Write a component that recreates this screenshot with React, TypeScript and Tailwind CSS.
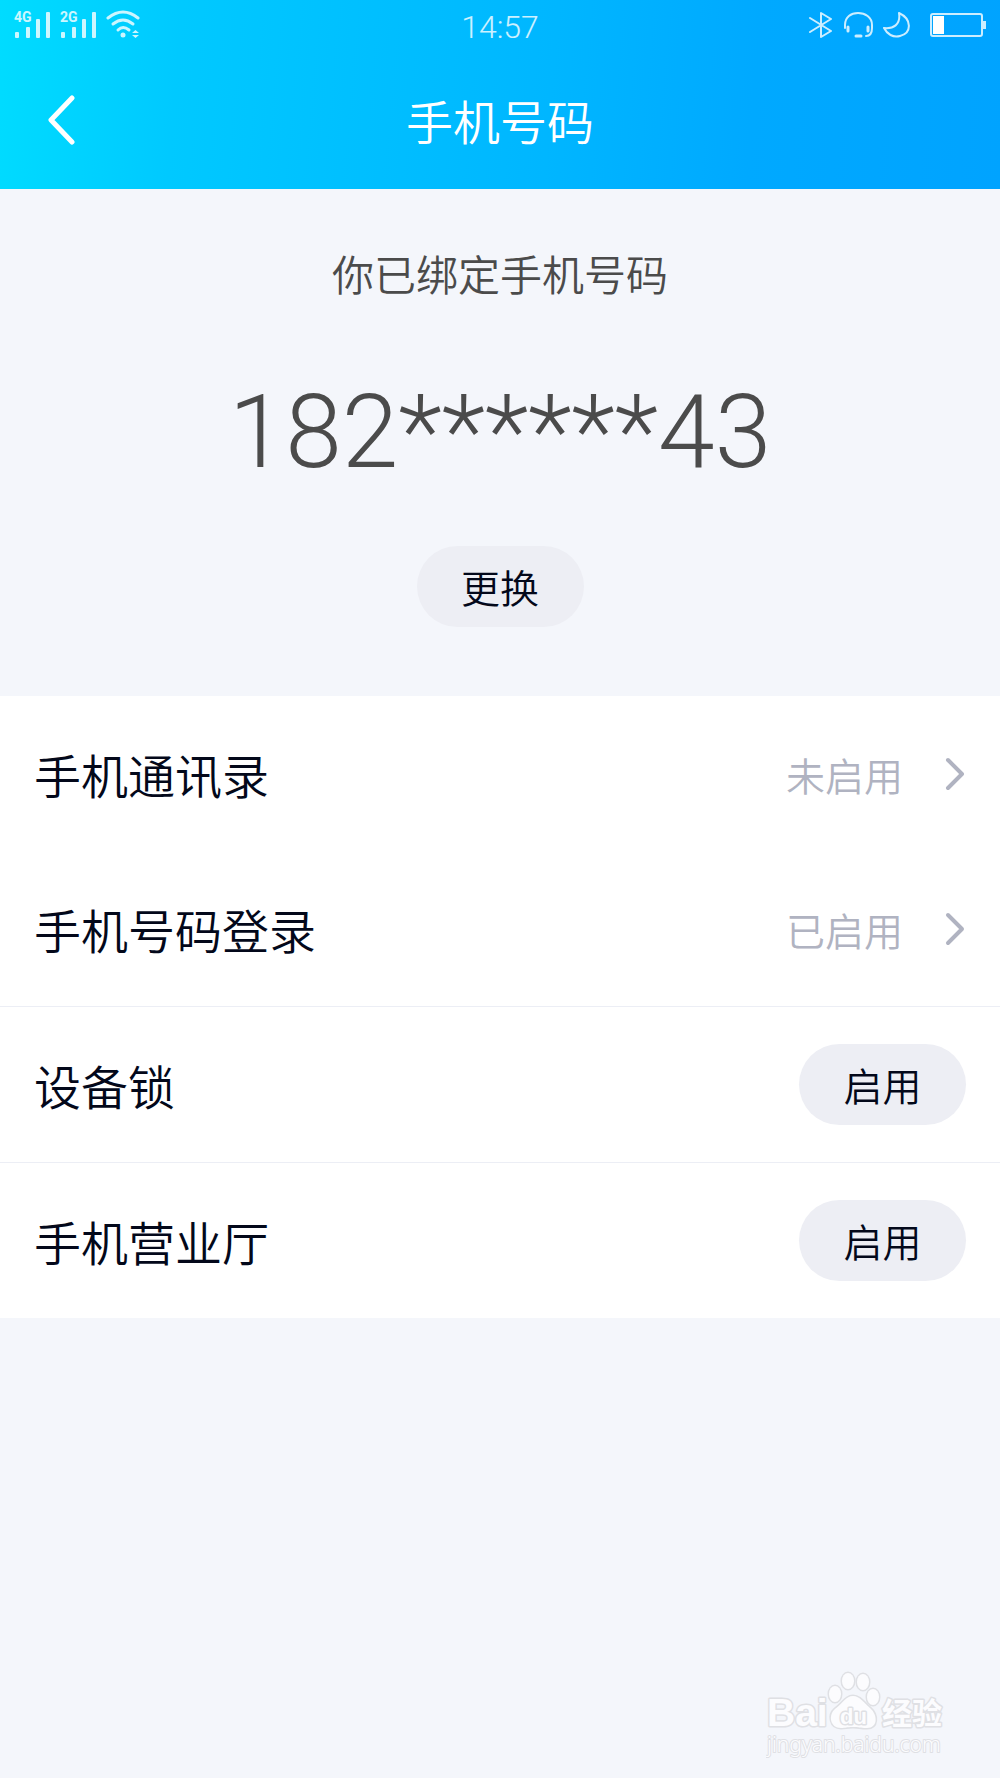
import { ReactNode } from "react";

type Row = {
  label: string;
  status?: string;
  action?: string;
  divider?: boolean;
};

const rows: Row[] = [
  { label: "手机通讯录", status: "未启用" },
  { label: "手机号码登录", status: "已启用", divider: true },
  { label: "设备锁", action: "启用", divider: true },
  { label: "手机营业厅", action: "启用" },
];

function Signal({ label }: { label: string }) {
  return (
    <svg width="37" height="30" viewBox="0 0 37 30" fill="currentColor" role="img" aria-label={label}>
      <text x="0" y="14" fontSize="14" fontWeight="700" fontFamily="Roboto, sans-serif">
        {label}
      </text>
      <rect x="1" y="24" width="4" height="6" rx="1" />
      <rect x="12" y="19" width="4" height="11" rx="1" />
      <rect x="22" y="11" width="4" height="19" rx="1" />
      <rect x="32" y="4" width="4" height="26" rx="1" />
    </svg>
  );
}

function StatusBar() {
  return (
    <div className="grid h-[54px] grid-cols-3 px-[14px] pt-2 text-white/80">
      <div className="flex gap-[9px]">
        <Signal label="4G" />
        <Signal label="2G" />
        {/* Wi-Fi */}
        <svg width="36" height="30" viewBox="0 0 36 30" fill="none" stroke="currentColor" strokeWidth="3" strokeLinecap="round">
          <path d="M2 10Q17 -2 32 10" />
          <path d="M7 16Q17 8 27 16" />
          <path d="M12 22Q17 17 23 22" />
          <circle cx="17" cy="27" r="2.5" fill="currentColor" stroke="none" />
          <path d="M26 25L29.500 22 33 25ZM26 27L29.500 30 33 27Z" fill="currentColor" stroke="none" />
        </svg>
      </div>

      <time className="pt-[3px] text-center font-[Roboto,sans-serif] text-[32px] leading-8 font-light">14:57</time>

      <div className="flex justify-end">
        <svg width="180" height="30" viewBox="0 0 180 30" fill="none" stroke="currentColor" strokeWidth="2" strokeLinejoin="round" strokeLinecap="round">
          {/* Bluetooth */}
          <path d="M4 10L25 23 15 29V5L25 11 4 24" />
          {/* headset */}
          <path d="M39 20V17C39 9 45 5 52 5S66 9 66 17V20C66 26 64 28 60 28" />
          <path d="M42 19V23M62 19V23M50 28H55" strokeWidth="3" />
          {/* moon */}
          <path d="M93 5C106 11 106 25 94 28C87 30 81 26 78 20C87 21 95 17 93 5Z" />
          {/* battery */}
          <rect x="125" y="6" width="51" height="22" rx="2" />
          <rect x="127" y="8" width="11" height="18" fill="white" stroke="none" />
          <rect x="177" y="13" width="3" height="8" fill="currentColor" stroke="none" />
        </svg>
      </div>
    </div>
  );
}

function PillButton({ children, label }: { children: ReactNode; label?: string }) {
  return (
    <button
      type="button"
      aria-label={label}
      className="h-[81px] w-[167px] rounded-full bg-[#edeef4] text-[39px] leading-[81px] font-[350] text-[#03081a]"
    >
      {children}
    </button>
  );
}

function Watermark() {
  return (
    <svg
      width="184"
      height="92"
      viewBox="0 0 184 92"
      fill="#fcfcfe"
      stroke="#dfe0e4"
      strokeWidth="3"
      paintOrder="stroke"
      strokeLinejoin="round"
    >
      <text x="1" y="57" fontSize="39" fontWeight="700" fontFamily="Liberation Sans, sans-serif">
        Bai
      </text>
      <ellipse cx="69" cy="25" rx="6" ry="8" />
      <ellipse cx="82" cy="12" rx="6" ry="8" />
      <ellipse cx="97" cy="13" rx="6" ry="8" />
      <ellipse cx="107" cy="28" rx="6" ry="8" />
      <path d="M87 27C94 27 98 34 104 39C112 46 112 59 101 59C93 59 94 58 87 58C80 58 80 59 75 59C64 59 62 46 69 40C77 34 80 27 87 27Z" />
      <text x="74" y="55" fontSize="22" fontWeight="700" fontFamily="Liberation Sans, sans-serif">
        du
      </text>
      <text x="116" y="55" fontSize="30" fontWeight="700" fontFamily="Noto Sans CJK SC, sans-serif">
        经验
      </text>
      <text x="1" y="83" fontSize="21" strokeWidth="2" fontFamily="Noto Sans, sans-serif">
        jingyan.baidu.com
      </text>
    </svg>
  );
}

export default function App() {
  return (
    <div className="flex min-h-screen flex-col bg-[#f4f6fb] font-['Noto_Sans_CJK_SC',sans-serif] font-[350] text-[#03081a]">
      <header className="bg-[linear-gradient(95deg,#00dcff_0%,#00c9ff_18%,#00c0ff_35%,#00b6ff_55%,#00a9ff_75%,#00a3ff_100%)] text-white">
        <StatusBar />
        <div className="grid h-[135px] grid-cols-[1fr_auto_1fr] items-center px-[48px] pb-1">
          <a href="#back" aria-label="返回" className="w-fit">
            <svg width="27" height="50" viewBox="0 0 27 50" fill="none" stroke="currentColor" strokeWidth="5" strokeLinecap="round" strokeLinejoin="round">
              <path d="M24 3L3 25 24 47" />
            </svg>
          </a>
          <h1 className="text-[47px] leading-[60px] font-[350]">手机号码</h1>
        </div>
      </header>

      <section className="flex flex-col items-center pt-[54px] pb-[69px] text-[#4b4b4b]">
        <p className="text-[42px] leading-[60px]">你已绑定手机号码</p>
        <p className="mt-[69px] font-[Roboto,sans-serif] text-[102px] leading-[120px] font-light">182******43</p>
        <div className="mt-[54px]">
          <PillButton>更换</PillButton>
        </div>
      </section>

      <ul className="bg-white">
        {rows.map((row) => (
          <li key={row.label} className={row.divider ? "border-b border-[#eceef5]" : ""}>
            <div className="flex h-[155px] items-center justify-between px-[34px]">
              <span className="text-[47px] leading-[60px]">{row.label}</span>
              {row.status && (
                <a href="#detail" aria-label={row.label} className="flex items-center gap-[42px] text-[#b0b3c1]">
                  <span className="text-[39px] leading-[60px]">{row.status}</span>
                  <svg width="21" height="34" viewBox="0 0 21 34" fill="none" stroke="currentColor" strokeWidth="4" strokeLinecap="round" strokeLinejoin="round">
                    <path d="M3 3L17 17 3 31" />
                  </svg>
                </a>
              )}
              {row.action && <PillButton label={`${row.action}${row.label}`}>{row.action}</PillButton>}
            </div>
          </li>
        ))}
      </ul>

      <footer className="mt-auto flex justify-end pr-[50px] pb-[17px]">
        <Watermark />
      </footer>
    </div>
  );
}
